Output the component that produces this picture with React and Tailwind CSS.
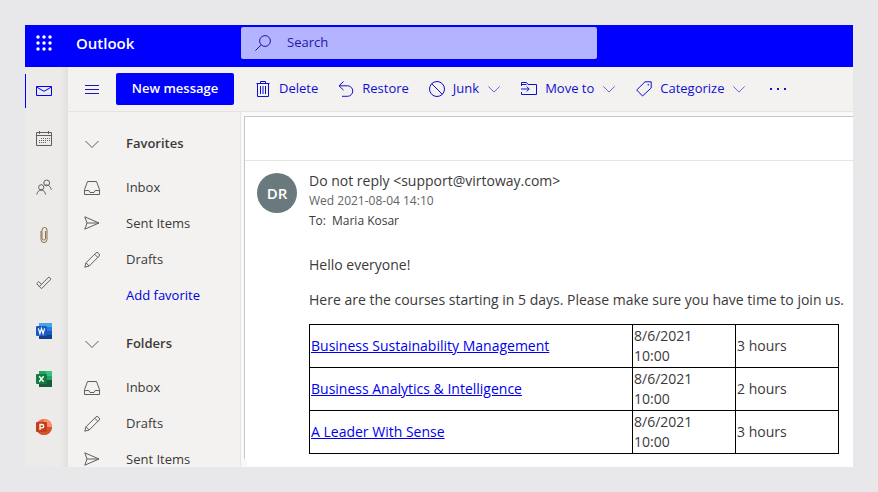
import React from 'react';

const Icon = ({ children, className = '' }) => (
  <svg
    viewBox="0 0 16 16"
    fill="none"
    stroke="currentColor"
    strokeWidth="1"
    className={`shrink-0 ${className || 'h-4 w-4'}`}
    aria-hidden="true"
  >
    {children}
  </svg>
);

const WaffleIcon = () => (
  <svg viewBox="0 0 16 16" className="h-4 w-4" fill="currentColor" aria-hidden="true">
    {[2, 8, 14].map((y) =>
      [2, 8, 14].map((x) => <circle key={`${x}-${y}`} cx={x} cy={y} r="1.7" />)
    )}
  </svg>
);

const SearchIcon = () => (
  <Icon>
    <circle cx="10" cy="6" r="5.4" />
    <path d="M6.2 9.8.4 15.6" />
  </Icon>
);

const MenuIcon = () => (
  <Icon>
    <path d="M1 4.5h14M1 8.5h14M1 12.5h14" />
  </Icon>
);

const MailIcon = () => (
  <Icon>
    <path d="M.5 3.5h15v9H.5zM.5 4 8 8.3 15.5 4" />
  </Icon>
);

const CalendarIcon = () => (
  <Icon>
    <path d="M.5 1.5h15v13H.5zM.5 4.5h15M3.5 0v3M12.5 0v3" />
    <path d="M5 7.5h9M3 9.5h11M3 11.5h8" strokeDasharray="1 1" />
  </Icon>
);

const PeopleIcon = () => (
  <Icon>
    <circle cx="10.7" cy="3.9" r="2.9" />
    <path d="M8.8 6.3c1.3-.5 2.7-.4 3.9.3 1.4.9 2.3 2.3 2.5 4.1" />
    <circle cx="5.2" cy="8.3" r="2.6" />
    <path d="M.9 15.5c.2-2.6 2-4.4 4.3-4.4s4.1 1.8 4.3 4.4" />
  </Icon>
);

const ClipIcon = () => (
  <Icon className="h-4 w-4 text-[#8a6f4d]">
    <path d="M5 4v8.5a3 3 0 0 0 6 0V3a2.5 2.5 0 0 0-5 0v9a2 2 0 0 0 3.5 0V4" />
  </Icon>
);

const TodoIcon = () => (
  <Icon>
    <path d="m.7 8.7 2.1-2.1 2.7 2.7 7.3-7.3 2.2 2.2-9.5 9.5zM3.5 11.3l2-2" />
  </Icon>
);

const ChevronIcon = ({ className }) => (
  <Icon className={className}>
    <path d="M1.5 5 8 11.500 14.500 5" />
  </Icon>
);

const InboxIcon = () => (
  <Icon>
    <path d="M3.5 1.5h9l3 8v5H.5v-5zM.5 10.5h4.3l1.2 2h4l1.2-2h4.3" />
  </Icon>
);

const SendIcon = () => (
  <Icon>
    <path d="M.8.8 15 7 .8 13.200 3 7zM3 7h12" />
  </Icon>
);

const PencilIcon = () => (
  <Icon>
    <path d="M.8 15.2 2 10.8 11.8 1a1.7 1.7 0 0 1 2.4 0l.8.8a1.7 1.7 0 0 1 0 2.4L5.2 14zM2 10.8 5.2 14M10.6 2.2l3.2 3.2" />
  </Icon>
);

const TrashIcon = () => (
  <Icon>
    <path d="M1.5 2.5h13M5.5 2.5v-2h5v2M2.5 2.5v13h11v-13M5.5 5v8M8 5v8M10.5 5v8" />
  </Icon>
);

const UndoIcon = () => (
  <Icon>
    <path d="M5.5.5 1 4.8l4.5 4.3M1 4.8h8.5a5.2 5.2 0 0 1 0 10.5H4" />
  </Icon>
);

const BlockIcon = () => (
  <Icon>
    <circle cx="8" cy="8" r="7.5" />
    <path d="m2.7 2.7 10.6 10.6" />
  </Icon>
);

const MoveIcon = () => (
  <Icon>
    <path d="M.5 5V1.5h5l1.5 2h8.5v10H.5V11M5.5 3.5H.5M0 8h8M5.7 5.5 8.2 8l-2.5 2.5" />
  </Icon>
);

const TagIcon = () => (
  <Icon>
    <path d="M9 .8h6.2V7L6.5 15 .7 9z" />
    <circle cx="12.3" cy="3.7" r=".8" fill="currentColor" stroke="none" />
  </Icon>
);

const MoreIcon = () => (
  <svg viewBox="0 0 16 16" className="h-4 w-4" fill="currentColor" aria-hidden="true">
    <path d="M0 7h2v2H0zM7 7h2v2H7zM14 7h2v2h-2z" />
  </svg>
);

const WordIcon = () => (
  <svg viewBox="0 0 16 16" className="h-4 w-4" aria-hidden="true">
    <path fill="#41a5ee" d="M3 0h13v4H3z" />
    <path fill="#2b7cd3" d="M3 4h13v4H3z" />
    <path fill="#185abd" d="M3 8h13v4H3z" />
    <path fill="#103f91" d="M3 12h13v4H3z" />
    <rect y="3" width="11" height="10" rx="1" fill="#185abd" />
    <path d="m2.4 5.3 1.5 5.4 1.6-5.2 1.6 5.2 1.5-5.4" fill="none" stroke="#fff" strokeWidth="1.2" />
  </svg>
);

const ExcelIcon = () => (
  <svg viewBox="0 0 16 16" className="h-4 w-4" aria-hidden="true">
    <path fill="#21a366" d="M3 0h7v5H3z" />
    <path fill="#33c481" d="M10 0h6v5h-6z" />
    <path fill="#107c41" d="M3 5h7v5H3z" />
    <path fill="#21a366" d="M10 5h6v4h-6z" />
    <path fill="#185c37" d="M3 9h13v7H3z" />
    <rect y="3" width="11" height="10" rx="1" fill="#107c41" />
    <path d="m3.2 5.2 4.4 5.6M7.6 5.2l-4.4 5.6" stroke="#fff" strokeWidth="1.4" />
  </svg>
);

const PowerPointIcon = () => (
  <svg viewBox="0 0 16 16" className="h-4 w-4" aria-hidden="true">
    <circle cx="8" cy="8" r="8" fill="#ed6c47" />
    <path fill="#ff8f6b" d="M8 0a8 8 0 0 1 8 8H8z" />
    <path fill="#d35230" d="M0 8h16A8 8 0 0 1 0 8z" />
    <rect y="3" width="11" height="10" rx="1" fill="#c43e1c" />
    <path d="M4 11V5.5h2a1.7 1.7 0 0 1 0 3.4H4" fill="none" stroke="#fff" strokeWidth="1.3" />
  </svg>
);

const apps = [
  { label: 'Mail', icon: MailIcon, active: true },
  { label: 'Calendar', icon: CalendarIcon },
  { label: 'People', icon: PeopleIcon },
  { label: 'Files', icon: ClipIcon },
  { label: 'To Do', icon: TodoIcon },
  { label: 'Word', icon: WordIcon },
  { label: 'Excel', icon: ExcelIcon },
  { label: 'PowerPoint', icon: PowerPointIcon },
];

const actions = [
  { label: 'Delete', icon: TrashIcon },
  { label: 'Restore', icon: UndoIcon },
  { label: 'Junk', icon: BlockIcon, menu: true },
  { label: 'Move to', icon: MoveIcon, menu: true },
  { label: 'Categorize', icon: TagIcon, menu: true },
];

const sections = [
  {
    title: 'Favorites',
    items: [
      { label: 'Inbox', icon: InboxIcon },
      { label: 'Sent Items', icon: SendIcon },
      { label: 'Drafts', icon: PencilIcon },
    ],
    action: 'Add favorite',
  },
  {
    title: 'Folders',
    items: [
      { label: 'Inbox', icon: InboxIcon },
      { label: 'Drafts', icon: PencilIcon },
      { label: 'Sent Items', icon: SendIcon },
    ],
  },
];

const courses = [
  { name: 'Business Sustainability Management', date: '8/6/2021', time: '10:00', length: '3 hours' },
  { name: 'Business Analytics & Intelligence', date: '8/6/2021', time: '10:00', length: '2 hours' },
  { name: 'A Leader With Sense', date: '8/6/2021', time: '10:00', length: '3 hours' },
];

const Header = () => (
  <header className="flex h-[42px] shrink-0 items-start bg-[#0000ff] text-white">
    <div className="flex h-9 w-[216px] shrink-0 items-center">
      <button aria-label="App launcher" className="ml-[11px] flex w-4 justify-center">
        <WaffleIcon />
      </button>
      <span className="ml-6 text-[15px] font-semibold">Outlook</span>
    </div>
    <label className="mt-0.5 flex h-8 w-[356px] items-center gap-4 rounded-xs bg-[#b3b3ff] px-3.5 text-[#1a1aa6]">
      <SearchIcon />
      <input
        type="text"
        aria-label="Search"
        placeholder="Search"
        className="min-w-0 flex-1 bg-transparent text-[13px] outline-none placeholder:text-[#1a1aa6]"
      />
    </label>
  </header>
);

const AppRail = () => (
  <nav aria-label="Apps" className="flex w-[43px] shrink-0 flex-col bg-gradient-to-r from-[#edebe9] from-80% to-[#e3e1de] text-[#605e5c]">
    {apps.map(({ label, icon: AppIcon, active }) => (
      <button
        key={label}
        aria-label={label}
        className={
          active
            ? 'flex h-12 shrink-0 items-center text-[#0000ff]'
            : 'flex h-12 shrink-0 items-center pl-[11px]'
        }
      >
        {active && <span className="mr-2.5 h-[34px] w-px bg-[#0000ff]" />}
        <AppIcon />
      </button>
    ))}
  </nav>
);

const Toolbar = () => (
  <div className="flex h-[45px] shrink-0 items-center border-b border-[#e6e4e2] text-[#0f0fd0]">
    <button aria-label="Toggle folders" className="ml-4 text-[#1b1ba8]">
      <MenuIcon />
    </button>
    <button className="ml-4 h-8 w-[118px] shrink-0 rounded-xs bg-[#0000ff] text-[13px] font-semibold text-white">
      New message
    </button>
    <div className="ml-[21px] flex items-center gap-5">
      {actions.map(({ label, icon: ActionIcon, menu }) => (
        <button key={label} className="flex items-center gap-2 whitespace-nowrap text-[13px]">
          <ActionIcon />
          {label}
          {menu && <ChevronIcon className="size-3.5 opacity-70" />}
        </button>
      ))}
      <button aria-label="More actions" className="ml-1">
        <MoreIcon />
      </button>
    </div>
  </div>
);

const FolderPane = () => (
  <nav aria-label="Folders" className="flex w-[173px] shrink-0 flex-col gap-1 border-r border-[#e6e4e2] pt-1.5 text-[13px] text-[#3b3a39]">
    {sections.map((section) => (
      <div key={section.title} className="shrink-0">
        <button className="flex h-[52px] w-full items-center gap-[26px] pl-4 font-semibold">
          <ChevronIcon className="h-4 w-4 text-[#605e5c]" />
          {section.title}
        </button>
        <ul>
          {section.items.map(({ label, icon: FolderIcon }) => (
            <li key={label}>
              <a href="#" className="flex h-9 items-center gap-[26px] pl-4">
                <span className="text-[#605e5c]">
                  <FolderIcon />
                </span>
                {label}
              </a>
            </li>
          ))}
        </ul>
        {section.action && (
          <button className="flex h-9 items-center pl-[58px] text-[#0000e0]">{section.action}</button>
        )}
      </div>
    ))}
  </nav>
);

const Message = () => (
  <main className="flex min-w-0 flex-1 flex-col bg-[#faf9f8] pt-1 pl-[3px]">
    <article className="flex-1 border-t border-l border-[#c8c6c4] bg-white text-[#3b3a39]">
      <div className="h-11 border-b border-[#e6e4e2]" />
      <div className="flex gap-3 pt-2.5 pl-3">
        <div className="mt-0.5 flex size-10 shrink-0 items-center justify-center rounded-full bg-[#69797e] text-[15px] font-semibold text-white">
          DR
        </div>
        <div className="min-w-0 flex-1">
          <div className="text-xs leading-5 whitespace-nowrap">
            <p className="text-sm leading-5">Do not reply &lt;support@virtoway.com&gt;</p>
            <p className="text-[#666462]">Wed 2021-08-04 14:10</p>
            <p>
              <span className="mr-1.5 font-medium">To:</span>
              Maria Kosar
            </p>
          </div>
          <div className="mt-6 text-sm leading-5 whitespace-nowrap">
            <p>Hello everyone!</p>
            <p className="mt-[15px]">
              Here are the courses starting in 5 days. Please make sure you have time to join us.
            </p>
            <table className="mt-3.5 w-[530px] table-fixed border-collapse">
              <tbody>
                {courses.map((course) => (
                  <tr key={course.name}>
                    <td className="border border-black p-px">
                      <a href="#" className="text-[#0000ee] underline">
                        {course.name}
                      </a>
                    </td>
                    <td className="w-[103px] border border-black p-px">
                      {course.date}
                      <br />
                      {course.time}
                    </td>
                    <td className="w-[103px] border border-black p-px">{course.length}</td>
                  </tr>
                ))}
              </tbody>
            </table>
          </div>
        </div>
      </div>
    </article>
    <div className="ml-[3px] h-2 shrink-0 bg-white" />
  </main>
);

const App = () => (
  <div className="flex h-screen flex-col bg-[#e8e8ea] p-[25px] font-['Open_Sans',sans-serif]">
    <div className="flex min-h-0 flex-1 flex-col overflow-hidden bg-[#f3f2f1]">
      <Header />
      <div className="flex min-h-0 flex-1">
        <AppRail />
        <div className="flex min-w-0 flex-1 flex-col">
          <Toolbar />
          <div className="flex min-h-0 flex-1">
            <FolderPane />
            <Message />
          </div>
        </div>
      </div>
    </div>
  </div>
);

export default App;
